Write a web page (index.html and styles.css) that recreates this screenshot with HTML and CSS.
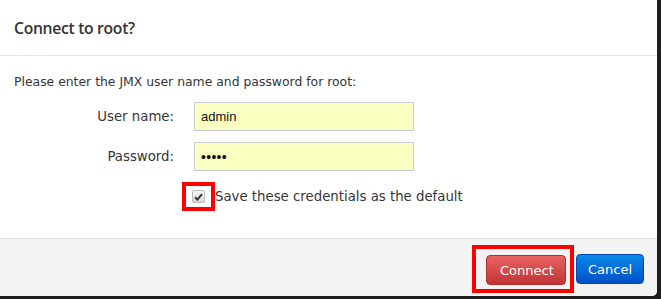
FILE: index.html
```html
<!DOCTYPE html>
<html>
<head>
<meta charset="utf-8">
<link rel="stylesheet" href="styles.css">
</head>
<body>
<div class="dialog">
  <div class="header"><h3 class="title">Connect to root?</h3></div>
  <div class="body">
    <p class="intro">Please enter the JMX user name and password for root:</p>
    <div class="row">
      <label class="label">User name:</label>
      <div class="input">admin</div>
    </div>
    <div class="row">
      <label class="label">Password:</label>
      <div class="input pw">&#8226;&#8226;&#8226;&#8226;&#8226;</div>
    </div>
    <div class="check-row">
      <span class="highlight"><span class="checkbox"><svg width="9" height="8" viewBox="0 0 9 8"><path d="M1 4.2 L3.4 6.6 L8 1.2" fill="none" stroke="#333" stroke-width="2"/></svg></span></span>
      <span class="check-label">Save these credentials as the default</span>
    </div>
  </div>
  <div class="footer">
    <span class="highlight-btn"><button class="btn btn-danger">Connect</button></span>
    <button class="btn btn-primary">Cancel</button>
  </div>
</div>
</body>
</html>
```

FILE: styles.css
```css
html, body {
  margin: 0;
  padding: 0;
  background: #1e1e1e;
  width: 661px;
  height: 299px;
  overflow: hidden;
}
.dialog {
  width: 657px;
  height: 296px;
  background: #fff;
  display: flex;
  flex-direction: column;
  border-radius: 0 0 5px 0;
  overflow: hidden;
  font-family: "DejaVu Sans", sans-serif;
  color: #363636;
}
.header {
  height: 56px;
  border-bottom: 1px solid #e5e5e5;
  display: flex;
  align-items: center;
  padding-left: 14px;
  box-sizing: border-box;
}
.title {
  margin: 0;
  font-family: "Open Sans", sans-serif;
  font-weight: 600;
  font-size: 15.7px;
  color: #333;
  letter-spacing: -0.3px;
}
.body {
  flex: 1;
  padding: 17px 14px 0 14px;
  font-size: 13.3px;
}
.intro {
  margin: 0 0 11px 0;
  line-height: 18px;
  font-size: 12.4px;
}
.row {
  display: flex;
  align-items: center;
  margin-bottom: 11px;
}
.label {
  width: 160px;
  text-align: right;
  padding-right: 20px;
}
.input {
  width: 220px;
  height: 29px;
  box-sizing: border-box;
  border: 1px solid #cccccc;
  background: #fbffc1;
  padding: 0 6px;
  display: flex;
  align-items: center;
  font-family: "Liberation Sans", sans-serif;
  font-size: 13px;
  color: #111;
}
.input.pw {
  font-size: 14px;
  letter-spacing: 0.3px;
}
.check-row {
  display: flex;
  align-items: center;
  margin-top: 1px;
  padding-left: 168px;
}
.highlight {
  width: 33px;
  height: 29px;
  box-sizing: border-box;
  border: 4px solid #ff0000;
  display: flex;
  align-items: center;
  justify-content: flex-end;
  padding-right: 6px;
}
.checkbox {
  width: 13px;
  height: 13px;
  box-sizing: border-box;
  border: 1px solid #bbb;
  border-radius: 2px;
  background: linear-gradient(#f4f4f4, #d8d8d8);
  display: flex;
  align-items: center;
  justify-content: center;
}
.check-label {
  margin-left: 0;
  color: #363636;
}
.footer {
  height: 58px;
  background: #f3f3f3;
  border-top: 1px solid #dddddd;
  box-sizing: border-box;
  display: flex;
  align-items: center;
  justify-content: flex-end;
  padding-right: 13px;
  padding-top: 3px;
}
.highlight-btn {
  border: 4px solid #ff0000;
  padding: 6px 4px 4px 10px;
  display: flex;
  margin-right: 2px;
}
.btn {
  height: 30px;
  border-radius: 4px;
  font-family: "DejaVu Sans", sans-serif;
  font-size: 13px;
  color: #fff;
  padding: 0 13px;
  cursor: pointer;
}
.btn-danger {
  width: 80px;
  background: linear-gradient(#e96262, #c03535);
  border: 1px solid #b12e2e;
}
.btn-primary {
  width: 68px;
  padding: 0 9px;
  background: linear-gradient(#0a88e8, #0050c8);
  border: 1px solid #0049b0;
}
```
